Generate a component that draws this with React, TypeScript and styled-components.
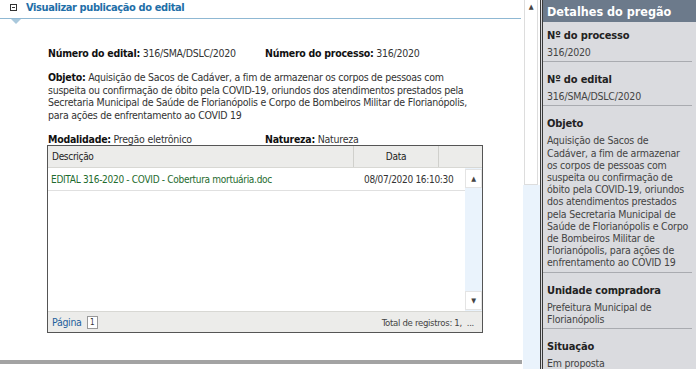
import styled, { createGlobalStyle } from "styled-components";

const GlobalStyle = createGlobalStyle`
  html, body {
    margin: 0;
    padding: 0;
    background: #ffffff;
    overflow: hidden;
  }
  body {
    font-family: "DejaVu Sans Condensed", "DejaVu Sans", Tahoma, sans-serif;
    font-size: 10.5px;
    letter-spacing: -0.25px;
    color: #333;
  }
`;

const Page = styled.div`
  display: flex;
  width: 696px;
  height: 369px;
  overflow: hidden;
`;

const Main = styled.div`
  width: 523px;
  display: flex;
  flex-direction: column;
`;

const SectionHead = styled.div`
  position: relative;
  display: flex;
  align-items: center;
  gap: 9px;
  height: 14px;
  padding: 0 0 4px 10px;
  border-bottom: 1px solid #8fb8d3;
  margin-right: 2px;
`;

const Toggle = styled.span`
  width: 5px;
  height: 5px;
  border: 1px solid #333;
  position: relative;
  &::after {
    content: "";
    position: absolute;
    left: 1px;
    right: 1px;
    top: 2px;
    height: 1px;
    background: #333;
  }
`;

const SectionTitle = styled.span`
  color: #1f6fa8;
  font-weight: bold;
  font-size: 11px;
  letter-spacing: -0.4px;
`;

const Pointer = styled.span`
  position: absolute;
  left: 11px;
  bottom: -6px;
  width: 0;
  height: 0;
  border-left: 5px solid transparent;
  border-right: 5px solid transparent;
  border-top: 5px solid #a9c8dc;
`;

const Content = styled.div`
  padding: 28px 0 0 48px;
  display: flex;
  flex-direction: column;
`;

const Row = styled.div<{ $mt?: number; $w?: number }>`
  display: flex;
  margin-top: ${(p) => p.$mt ?? 0}px;
  width: ${(p) => (p.$w ? `${p.$w}px` : "auto")};
  line-height: 12.4px;
`;

const Field = styled.div<{ $w?: number }>`
  width: ${(p) => (p.$w ? `${p.$w}px` : "auto")};
  flex: ${(p) => (p.$w ? "none" : 1)};
  b {
    color: #111;
  }
`;

const Grid = styled.div`
  margin-left: -1px;
  width: 434px;
  height: 186px;
  border: 1px solid #555;
  display: flex;
  flex-direction: column;
  font-size: 10px;
  letter-spacing: -0.3px;
`;

const GridHead = styled.div`
  display: flex;
  height: 21px;
  background: #ececea;
  border-bottom: 1px solid #d8d8d4;
`;

const HeadCell = styled.div<{ $w?: number; $center?: boolean; $last?: boolean }>`
  width: ${(p) => (p.$w ? `${p.$w}px` : "auto")};
  flex: ${(p) => (p.$w ? "none" : 1)};
  display: flex;
  align-items: center;
  justify-content: ${(p) => (p.$center ? "center" : "flex-start")};
  padding-left: ${(p) => (p.$center ? 0 : 4)}px;
  border-right: ${(p) => (p.$last ? "none" : "1px solid #d0d0cc")};
  color: #222;
`;

const GridBody = styled.div`
  flex: 1;
  display: flex;
`;

const Rows = styled.div`
  flex: 1;
`;

const DataRow = styled.div`
  display: flex;
  height: 22px;
  border-bottom: 1px solid #e0e0e0;
`;

const Cell = styled.div<{ $w?: number; $color?: string }>`
  width: ${(p) => (p.$w ? `${p.$w}px` : "auto")};
  flex: ${(p) => (p.$w ? "none" : 1)};
  display: flex;
  align-items: center;
  padding-left: 3px;
  color: ${(p) => p.$color ?? "#333"};
  white-space: nowrap;
`;

const VScroll = styled.div`
  width: 17px;
  display: flex;
  flex-direction: column;
  background: #eaf3fc;
`;

const ScrollBtn = styled.div`
  height: 17px;
  background: #fff;
  display: flex;
  align-items: center;
  justify-content: center;
  color: #444;
  font-size: 7px;
  border: 1px solid #e4e4e4;
  margin-bottom: 1px;
`;

const ScrollFill = styled.div`
  flex: 1;
`;

const GridFoot = styled.div`
  height: 20px;
  background: #ececea;
  border-top: 1px solid #d8d8d4;
  display: flex;
  align-items: center;
  justify-content: space-between;
  padding: 0 8px 0 4px;
`;

const PageLabel = styled.span`
  color: #1f5f9c;
  font-size: 10.5px;
  display: flex;
  align-items: center;
  gap: 5px;
`;

const PageBox = styled.span`
  width: 9px;
  height: 11px;
  border: 1px solid #999;
  background: #fff;
  font-size: 8px;
  color: #333;
  display: flex;
  align-items: center;
  justify-content: center;
`;

const Total = styled.span`
  font-size: 9.5px;
  color: #444;
`;

const BottomBar = styled.div`
  margin-top: 27px;
  margin-right: 1px;
  height: 4px;
  background: #a3a3a3;
`;

const PageScroll = styled.div`
  width: 17px;
  display: flex;
  flex-direction: column;
  background: linear-gradient(#fff 0 185px, #eaf3fc 185px);
`;

const PageTrack = styled.div`
  height: 185px;
  width: 14px;
  margin-left: 1px;
  background: #fff;
  border: 1px solid #ddd;
  border-top: none;
  display: flex;
  flex-direction: column;
  align-items: center;
  color: #444;
  font-size: 7px;
  padding-top: 3px;
  box-sizing: border-box;
`;

const Side = styled.div`
  flex: 1;
  background: #dadbdf;
  border-left: 3px double #3a3a3a;
  display: flex;
  flex-direction: column;
`;

const SideTitle = styled.div`
  height: 22px;
  flex: none;
  background: #6c7a8b;
  color: #fff;
  font-weight: bold;
  font-size: 12.5px;
  letter-spacing: 0;
  display: flex;
  align-items: center;
  padding-left: 4px;
`;

const SideBlock = styled.div<{ $first?: boolean; $last?: boolean }>`
  flex: none;
  padding: ${(p) => (p.$first ? 7 : 11)}px 1px 3px 4px;
  border-bottom: ${(p) => (p.$last ? "none" : "1px solid #a9abb0")};
  margin-right: 4px;
`;

const SideLabel = styled.div`
  font-weight: bold;
  color: #222;
  font-size: 11px;
  letter-spacing: -0.15px;
  line-height: 14px;
  margin-bottom: 3px;
`;

const SideValue = styled.div`
  color: #444;
  font-size: 10.5px;
  letter-spacing: -0.2px;
  line-height: 12.2px;
`;

const objeto =
  "Aquisição de Sacos de Cadáver, a fim de armazenar os corpos de pessoas com suspeita ou confirmação de óbito pela COVID-19, oriundos dos atendimentos prestados pela Secretaria Municipal de Saúde de Florianópolis e Corpo de Bombeiros Militar de Florianópolis, para ações de enfrentamento ao COVID 19";

const details = [
  { label: "Nº do processo", value: "316/2020" },
  { label: "Nº do edital", value: "316/SMA/DSLC/2020" },
  { label: "Objeto", value: objeto },
  { label: "Unidade compradora", value: "Prefeitura Municipal de Florianópolis" },
  { label: "Situação", value: "Em proposta" },
];

export default function App() {
  return (
    <Page>
      <GlobalStyle />
      <Main>
        <SectionHead>
          <Toggle />
          <SectionTitle>Visualizar publicação do edital</SectionTitle>
          <Pointer />
        </SectionHead>
        <Content>
          <Row>
            <Field $w={217}>
              <b>Número do edital:</b> 316/SMA/DSLC/2020
            </Field>
            <Field>
              <b>Número do processo:</b> 316/2020
            </Field>
          </Row>
          <Row $mt={12} $w={428}>
            <Field>
              <b>Objeto:</b> {objeto}
            </Field>
          </Row>
          <Row $mt={12}>
            <Field $w={217}>
              <b>Modalidade:</b> Pregão eletrônico
            </Field>
            <Field>
              <b>Natureza:</b> Natureza
            </Field>
          </Row>
          <Grid>
            <GridHead>
              <HeadCell>Descrição</HeadCell>
              <HeadCell $w={84} $center>
                Data
              </HeadCell>
              <HeadCell $w={39} $last />
            </GridHead>
            <GridBody>
              <Rows>
                <DataRow>
                  <Cell $color="#1e6b2e">
                    EDITAL 316-2020 - COVID - Cobertura mortuária.doc
                  </Cell>
                  <Cell $w={101}>08/07/2020 16:10:30</Cell>
                </DataRow>
              </Rows>
              <VScroll>
                <ScrollBtn style={{ marginTop: 1 }}>▲</ScrollBtn>
                <ScrollFill />
                <ScrollBtn>▼</ScrollBtn>
              </VScroll>
            </GridBody>
            <GridFoot>
              <PageLabel>
                Página <PageBox>1</PageBox>
              </PageLabel>
              <Total>Total de registros: 1, &nbsp;...</Total>
            </GridFoot>
          </Grid>
        </Content>
        <BottomBar />
      </Main>
      <PageScroll>
        <PageTrack>▲</PageTrack>
      </PageScroll>
      <Side>
        <SideTitle>Detalhes do pregão</SideTitle>
        {details.map((d, i) => (
          <SideBlock key={d.label} $first={i === 0} $last={i === details.length - 1}>
            <SideLabel>{d.label}</SideLabel>
            <SideValue>{d.value}</SideValue>
          </SideBlock>
        ))}
      </Side>
    </Page>
  );
}
